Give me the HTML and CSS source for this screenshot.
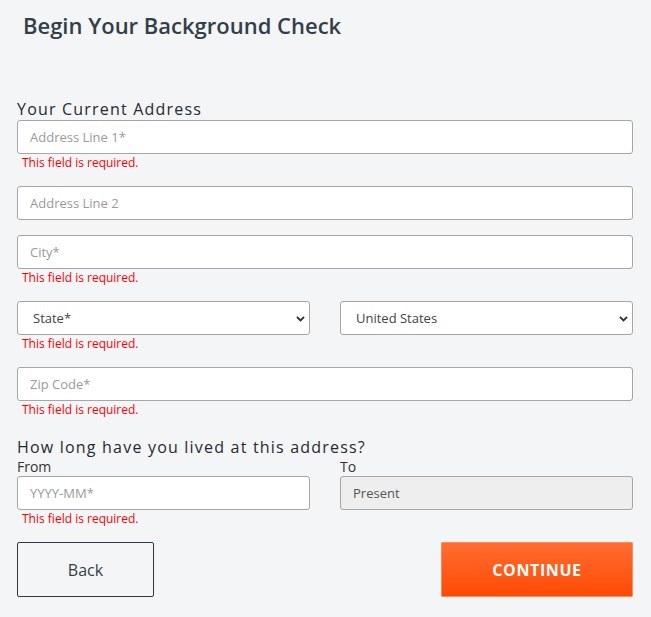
FILE: index.html
```html
<!DOCTYPE html>
<html lang="en">
<head>
<meta charset="utf-8">
<title>Begin Your Background Check</title>
<link rel="stylesheet" href="styles.css">
</head>
<body>
<main class="page">
  <h1 class="title">Begin Your Background Check</h1>
  <form class="form">
    <h2 class="section">Your Current Address</h2>
    <div class="field">
      <input class="input" type="text" placeholder="Address Line 1*">
      <div class="error">This field is required.</div>
    </div>
    <div class="field">
      <input class="input" type="text" placeholder="Address Line 2">
    </div>
    <div class="field">
      <input class="input" type="text" placeholder="City*">
      <div class="error">This field is required.</div>
    </div>
    <div class="row">
      <div class="field">
        <div class="select-wrap">
          <select class="input select"><option>State*</option></select>
          <svg class="chev" width="9" height="6" viewBox="0 0 9 6"><path d="M1 1l3.5 3.5L8 1" fill="none" stroke="#333" stroke-width="1.8"/></svg>
        </div>
        <div class="error">This field is required.</div>
      </div>
      <div class="field">
        <div class="select-wrap">
          <select class="input select"><option>United States</option></select>
          <svg class="chev" width="9" height="6" viewBox="0 0 9 6"><path d="M1 1l3.5 3.5L8 1" fill="none" stroke="#333" stroke-width="1.8"/></svg>
        </div>
      </div>
    </div>
    <div class="field">
      <input class="input" type="text" placeholder="Zip Code*">
      <div class="error">This field is required.</div>
    </div>
    <h2 class="section section-2">How long have you lived at this address?</h2>
    <div class="row">
      <div class="field">
        <label class="label">From</label>
        <input class="input" type="text" placeholder="YYYY-MM*">
        <div class="error">This field is required.</div>
      </div>
      <div class="field">
        <label class="label">To</label>
        <input class="input disabled" type="text" value="Present" disabled>
      </div>
    </div>
    <div class="actions">
      <button type="button" class="btn btn-back">Back</button>
      <button type="button" class="btn btn-continue">CONTINUE</button>
    </div>
  </form>
</main>
</body>
</html>
```
FILE: styles.css
```css
* { box-sizing: border-box; }
html, body {
  margin: 0;
  background: #f4f5f7;
  font-family: "Open Sans", "Noto Sans", sans-serif;
}
.page {
  width: 651px;
  padding: 0 18px 0 17px;
}
.title {
  margin: 0;
  padding: 10px 0 0 6px;
  font-size: 22px;
  line-height: 30px;
  font-weight: 600;
  color: #333f48;
}
.form {
  display: flex;
  flex-direction: column;
  margin-top: 58px;
}
.section {
  margin: 0;
  font-size: 16px;
  line-height: 22px;
  font-weight: 500;
  letter-spacing: 1.2px;
  color: #262b30;
}
.section-2 {
  margin-top: 4px;
  line-height: 20px;
}
.row {
  display: grid;
  grid-template-columns: 1fr 1fr;
  column-gap: 30px;
}
.field {
  display: flex;
  flex-direction: column;
  margin-bottom: 15px;
}
.label {
  font-size: 14px;
  line-height: 19px;
  color: #333;
}
.input {
  width: 100%;
  height: 34px;
  border: 1px solid #a6a6a6;
  border-radius: 3px;
  background: #fff;
  padding: 0 12px;
  font-family: "Open Sans", "Noto Sans", sans-serif;
  font-size: 13px;
  color: #555;
  outline: none;
}
.input::placeholder { color: #9a9a9a; }
.select-wrap { position: relative; }
.select {
  appearance: none;
  -webkit-appearance: none;
  display: block;
  padding-left: 15px;
  color: #444;
}
.chev {
  position: absolute;
  right: 5px;
  top: 15px;
  pointer-events: none;
}
.disabled {
  background: #eeeeee;
  color: #555;
}
.error {
  padding-left: 5px;
  font-size: 12px;
  line-height: 17px;
  color: #ff0000;
}
.actions {
  display: flex;
  justify-content: space-between;
}
.btn {
  height: 55px;
  padding-bottom: 1px;
  font-family: "Open Sans", "Noto Sans", sans-serif;
  font-size: 16px;
  cursor: pointer;
}
.btn-back {
  width: 137px;
  background: transparent;
  border: 1px solid #2d3a45;
  border-radius: 2px;
  color: #333f48;
}
.btn-continue {
  width: 192px;
  border: 1px solid #ff8a55;
  border-radius: 1px;
  background: linear-gradient(#ff6d31, #ff4a05);
  color: #fff;
  font-weight: 700;
  letter-spacing: 0.6px;
}
```
